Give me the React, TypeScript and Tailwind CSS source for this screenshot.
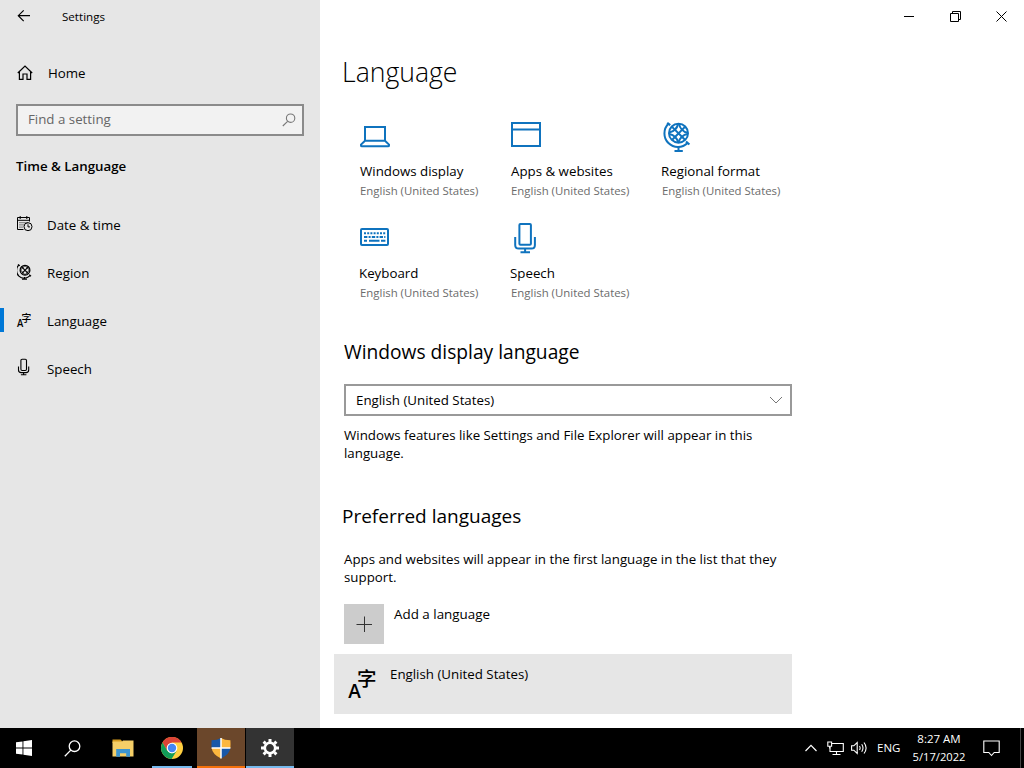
import type { ReactNode } from 'react';

const GlobeIcon = () => (
  <svg width="32" height="32" viewBox="0 0 32 32" fill="none" stroke="currentColor" strokeWidth="2">
    <circle cx="17.5" cy="12.2" r="9.5" />
    <path d="M6.2 1.8 L9.2 4.2 M25 20.5 L28.4 23.5" strokeWidth="2.2" />
    <path d="M7.4 2.8 A13.4 13.4 0 0 0 26.6 22" />
    <path d="M10.8 5.6 L24.2 19 M11 19 L24.2 5.6" />
    <path d="M8.2 11.6 C12.7 10.6 16.2 7 17.2 2.8 M26.6 13 C22.2 13.5 18.2 17.5 17.5 21.5" />
    <path d="M8.4 13 C12.7 14 16.2 17.5 17.2 21.5 M18 2.8 C18.7 7 22.2 11 26.6 11.8" />
    <path d="M17.5 26 V30 M13.5 30 H21.8" />
  </svg>
);

const SmallGlobeIcon = () => (
  <svg width="16" height="18" viewBox="0 0 16 18" fill="none" stroke="currentColor" strokeWidth="1.2">
    <circle cx="8" cy="7.2" r="4.9" />
    <path d="M1 1.4 L2.8 2.8 M12.3 11.6 L14 13.2 M1.7 2.2 A7.2 7.2 0 0 0 12.8 12.9" />
    <path d="M4.7 3.9 L11.3 10.6 M4.7 10.6 L11.3 3.9" />
    <path d="M3.5 7 L8 2.6 L12.5 7 L8 11.8 Z" strokeWidth="0.9" />
    <path d="M7.5 14 V16 M5 16.2 H10" />
  </svg>
);

const LanguageGlyph = ({ size }: { size: number }) => (
  <svg className="overflow-visible" width={size} height={size} viewBox="0 0 28 28" fill="currentColor">
    <text x="0.2" y="28.6" fontSize="20.5" fontWeight="600" fontFamily="Open Sans, sans-serif" textLength="12.6" lengthAdjust="spacingAndGlyphs">A</text>
    <text x="9" y="17.2" fontSize="19.5" fontWeight="500" fontFamily="Noto Sans CJK SC, sans-serif">字</text>
  </svg>
);

const CalendarIcon = () => (
  <svg width="16" height="18" viewBox="0 0 16 18" fill="none" stroke="currentColor">
    <path d="M6.5 14.5 H0.5 V2.5 H12.5 V6.5 M0.5 5.3 H12.5 M3.2 1 V4 M9.8 1 V4" />
    <path d="M2.5 7.7 H11 M2.5 9.9 H7 M2.5 12.1 H6" strokeDasharray="1 1" />
    <circle cx="11" cy="11.7" r="4" />
    <path d="M11 9.3 V11.9 H13" />
  </svg>
);

const MicIcon = () => (
  <svg width="16" height="20" viewBox="0 0 16 20" fill="none" stroke="currentColor" strokeWidth="1.1">
    <rect x="3.9" y="1.2" width="5.6" height="11.3" rx="1.2" />
    <path d="M1.5 8.5 V12 Q1.5 14.6 4.1 14.6 H9.1 Q11.7 14.6 11.7 12 V8.5 M6.6 14.6 V16.8 M3.9 16.8 H9.4" />
  </svg>
);

const navItems = [
  { text: 'Date & time', icon: <CalendarIcon /> },
  { text: 'Region', icon: <SmallGlobeIcon /> },
  { text: 'Language', icon: <LanguageGlyph size={14} />, active: true },
  { text: 'Speech', icon: <MicIcon /> },
];

const TileIcon = ({ children }: { children: ReactNode }) => (
  <svg width="40" height="40" viewBox="0 0 40 40" fill="none" stroke="#0f73be" strokeWidth="2">
    {children}
  </svg>
);

const tiles = [
  {
    text: 'Windows display',
    labelClass: '',
    icon: (
      <TileIcon>
        <path d="M5 23.7 V10 H25 V23.7 Z M5 23.7 L1 27.6 V28.4 Q1 29.3 2 29.3 H28 Q29 29.3 29 28.4 V27.6 L25 23.7" />
      </TileIcon>
    ),
  },
  {
    text: 'Apps & websites',
    labelClass: '',
    icon: (
      <TileIcon>
        <path d="M1 6 H29 V29 H1 Z M1 12.6 H29" />
      </TileIcon>
    ),
  },
  {
    text: 'Regional format',
    labelClass: '-ml-px',
    icon: (
      <div className="-ml-px pt-1 text-[#0f73be]">
        <GlobeIcon />
      </div>
    ),
  },
  {
    text: 'Keyboard',
    labelClass: '-ml-px',
    icon: (
      <TileIcon>
        <rect x="1" y="10" width="27" height="16" rx="1" />
        <path d="M4 14.2 H25.4" strokeDasharray="2 1.2" />
        <path d="M4 18 H25.4" strokeDasharray="3.4 1.2 2 1.2" />
        <path d="M4 21.8 H7 M9 21.8 H19.5 M21 21.8 H25.4" />
      </TileIcon>
    ),
  },
  {
    text: 'Speech',
    labelClass: '-ml-px',
    icon: (
      <TileIcon>
        <rect x="8.4" y="5" width="11.5" height="20.7" rx="1" />
        <path d="M4.2 18 V26 Q4.2 29.6 7.8 29.6 H20.5 Q23.9 29.6 23.9 26 V18 M14.1 29.6 V33 M9.5 33.2 H19" />
      </TileIcon>
    ),
  },
];

const Sidebar = () => (
  <aside className="flex w-80 shrink-0 flex-col bg-[#e6e6e6]">
    <div className="flex h-8 items-center pl-[17px]">
      <svg width="14" height="14" viewBox="0 0 14 14" fill="none" stroke="currentColor" strokeWidth="1.2">
        <path d="M13 6.7 H1.5 M6.7 1.3 L1.3 6.7 L6.7 12.1" />
      </svg>
      <span className="ml-[31px] pt-px text-[11.6px]">Settings</span>
    </div>
    <div className="mt-[17px] flex h-12 items-center pl-[17px]">
      <svg width="16" height="16" viewBox="0 0 16 16" fill="none" stroke="currentColor" strokeWidth="1.2">
        <path d="M0.8 8 L8 1 L15.2 8 M2.4 6.8 V14.4 H6 V9 H10 V14.4 H13.6 V6.8" />
      </svg>
      <span className="ml-[15px] leading-5">Home</span>
    </div>
    <div className="mx-4 mt-[7px] flex h-8 items-center justify-between border-2 border-[#8b8b8b] bg-[#f2f2f2] pr-[6px] pl-[10px] text-[#666]">
      <span className="-mt-px">Find a setting</span>
      <svg width="14" height="14" viewBox="0 0 14 14" fill="none" stroke="#777" strokeWidth="1.1">
        <circle cx="8.6" cy="5.2" r="4.2" />
        <path d="M5.6 8.3 L0.8 13" />
      </svg>
    </div>
    <h2 className="mt-5 ml-4 h-5 leading-5 font-semibold">Time &amp; Language</h2>
    <nav className="mt-6">
      {navItems.map((item) => (
        <div key={item.text} className="flex h-12 items-center">
          <span className={item.active ? 'h-6 w-1 bg-[#0078d7]' : 'h-6 w-1'} />
          <span className="ml-[13px] flex w-[30px] items-center">{item.icon}</span>
          <span className="pt-0.5 leading-5">{item.text}</span>
        </div>
      ))}
    </nav>
  </aside>
);

const WindowControls = () => (
  <div className="flex h-8 justify-end">
    <div className="flex w-[46px] items-center pl-[18px]">
      <span className="h-px w-[10px] bg-black" />
    </div>
    <div className="flex w-[46px] items-center pl-[18px]">
      <svg width="11" height="11" viewBox="0 0 11 11" fill="none" stroke="black">
        <path d="M0.5 2.5 H8.5 V10.5 H0.5 Z M2.5 2.5 V0.5 H10.5 V8.5 H8.5" />
      </svg>
    </div>
    <div className="flex w-[46px] items-center pl-[18px]">
      <svg width="11" height="11" viewBox="0 0 11 11" stroke="black">
        <path d="M0.5 0.5 L10.5 10.5 M10.5 0.5 L0.5 10.5" />
      </svg>
    </div>
  </div>
);

const LanguagePage = () => (
  <main className="flex flex-1 flex-col bg-white">
    <WindowControls />
    <h1 className="mt-[22px] ml-[22px] h-9 text-[26.6px] leading-9 font-[360]">Language</h1>
    <div className="mt-[27px] ml-10 grid grid-cols-[151px_151px_150px]">
      {tiles.map((tile) => (
        <div key={tile.text} className="h-[102px] whitespace-nowrap">
          <div className="h-11">{tile.icon}</div>
          <div className={tile.labelClass}>
            <div className="h-5 leading-5">{tile.text}</div>
          </div>
          <div className="text-[11.4px] leading-[19px] text-[#6b6b6b]">English (United States)</div>
        </div>
      ))}
    </div>

    <div className="ml-6 w-[448px]">
      <h2 className="mt-[17px] h-7 text-[19.2px] leading-7">Windows display language</h2>
      <div className="mt-[18px] flex h-8 items-center justify-between border-2 border-[#999] pr-[7px] pl-[10px]">
        <span className="leading-5">English (United States)</span>
        <svg width="14" height="8" viewBox="0 0 14 8" fill="none" stroke="#777">
          <path d="M1 1 L7 7 L13 1" />
        </svg>
      </div>
      <p className="mt-[10px] leading-[18px]">
        Windows features like Settings and File Explorer will appear in this
        <br />
        language.
      </p>

      <h2 className="mt-10 -ml-0.5 h-7 text-[19px] leading-7">Preferred languages</h2>
      <p className="mt-5 leading-[18px] whitespace-nowrap">
        Apps and websites will appear in the first language in the list that they
        <br />
        support.
      </p>
      <div className="mt-[18px] flex h-10">
        <div className="flex w-10 items-center justify-center bg-[#ccc]">
          <svg width="16" height="16" viewBox="0 0 16 16" stroke="#333">
            <path d="M8.5 0.5 V16 M0.5 8.5 H16" />
          </svg>
        </div>
        <span className="ml-[10px] text-[13.4px] leading-5">Add a language</span>
      </div>
      <div className="mt-[10px] -ml-[10px] flex h-[60px] bg-[#e6e6e6] pt-[15px] pl-[14px]">
        <LanguageGlyph size={28} />
        <span className="-mt-[5px] ml-[14px] leading-5">English (United States)</span>
      </div>
    </div>
  </main>
);

const Taskbar = () => (
  <footer className="flex h-10 bg-black text-[11.5px] text-white">
    <div className="flex w-12 items-center justify-center">
      <svg width="16" height="16" viewBox="0 0 16 16" fill="white">
        <path d="M0 2.3 L6.5 1.4 V7.5 H0 Z M7.4 1.2 L16 0 V7.5 H7.4 Z M0 8.4 H6.5 V14.6 L0 13.7 Z M7.4 8.4 H16 V16 L7.4 14.8 Z" />
      </svg>
    </div>
    <div className="flex w-12 items-center justify-center">
      <svg width="17" height="17" viewBox="0 0 17 17" fill="none" stroke="white" strokeWidth="1.3">
        <circle cx="10.5" cy="6.2" r="5.3" />
        <path d="M6.8 10.1 L0.8 16.2" />
      </svg>
    </div>
    <div className="ml-[3px] flex w-12 items-center justify-center">
      <svg width="22" height="18" viewBox="0 0 22 18">
        <path d="M0.5 0.5 H8.5 L10 2 V4 H0.5 Z" fill="#d59b1f" />
        <path d="M0.5 2.5 H10 L11 1.5 H21.5 V17.5 H0.5 Z" fill="#f5cf68" />
        <path d="M4.2 10 H18 V17.8 H14.2 V14.2 H8 V17.8 H4.2 Z" fill="#3d95cf" />
      </svg>
    </div>
    <div className="ml-[5px] flex w-10 flex-col items-center">
      <div className="flex flex-1 items-center">
        <svg className="mt-[2px]" width="22" height="22" viewBox="0 0 22 22">
          <circle cx="11" cy="11" r="11" fill="#ffcf40" />
          <path d="M1.5 5.5 A11 11 0 0 1 20.6 5.5 H11 L6.2 13.8 Z" fill="#dc4437" />
          <path d="M1.5 5.5 L6.3 13.8 L11 16.5 L15.7 13.8 L10.6 22 A11 11 0 0 1 1.5 5.5 Z" fill="#119d58" />
          <circle cx="11" cy="11" r="5.3" fill="white" />
          <circle cx="11" cy="11" r="4.2" fill="#4486f4" />
        </svg>
      </div>
      <span className="h-[2px] w-10 bg-[#76b9ed]" />
    </div>
    <div className="ml-[5px] flex w-12 flex-col items-center bg-[#6b472b]">
      <div className="flex flex-1 items-center">
        <svg className="mt-px" width="20" height="22" viewBox="0 0 20 22">
          <path d="M10 1 V11 H0.6 Q0.3 7 0.6 3.3 Q6.5 3.3 10 1 Z M10 11 H19.4 Q18.5 17.5 10 21.5 Z" fill="#1958a8" />
          <path d="M10 1 Q13.5 3.3 19.4 3.3 Q19.7 7 19.4 11 H10 Z M0.6 11 H10 V21.5 Q1.5 17.5 0.6 11 Z" fill="#fdb73e" />
          <path d="M10 1 V21.5 M0.6 11 H19.4" stroke="white" strokeWidth="1.5" />
        </svg>
      </div>
      <span className="h-[2px] w-full bg-[#f5700a]" />
    </div>
    <div className="ml-px flex w-12 flex-col items-center bg-[#333]">
      <div className="flex flex-1 items-center">
        <svg className="mt-px" width="20" height="20" viewBox="-10 -10 20 20" stroke="white" fill="none">
          <circle r="5.2" strokeWidth="2.6" />
          <path d="M0 -9 V-6 M0 6 V9 M-9 0 H-6 M6 0 H9 M-6.4 -6.4 L-4.3 -4.3 M6.4 -6.4 L4.3 -4.3 M-6.4 6.4 L-4.3 4.3 M6.4 6.4 L4.3 4.3" strokeWidth="3" />
        </svg>
      </div>
      <span className="h-[2px] w-full bg-[#76b9ed]" />
    </div>

    <div className="ml-auto flex items-center">
      <svg width="12" height="8" viewBox="0 0 12 8" fill="none" stroke="white" strokeWidth="1.2">
        <path d="M0.5 7 L6 1.4 L11.5 7" />
      </svg>
      <svg className="ml-[10px]" width="17" height="15" viewBox="0 0 17 15" fill="none" stroke="white" strokeWidth="1.1">
        <path d="M5 2.5 H16.3 V10.5 H3 V6 M9.5 10.5 V13.5 M5.5 13.5 H13.5" />
        <path d="M0.8 1 H4.6 V5.2 H0.8 Z M2.7 5 V7.5" />
      </svg>
      <svg className="ml-[7px]" width="17" height="14" viewBox="0 0 17 14" fill="none" stroke="white" strokeWidth="1.1">
        <path d="M0.6 4.8 H2.8 L6.2 1.5 V12.5 L2.8 9.2 H0.6 Z M8.5 5 Q9.8 7 8.5 9 M10.7 3.3 Q13.3 7 10.7 10.7 M13 1.5 Q17.2 7 13 12.5" />
      </svg>
      <span className="ml-[9px] w-[24px]">ENG</span>
      <div className="ml-[11px] flex w-[54px] flex-col items-center leading-[18px] whitespace-nowrap">
        <span>8:27 AM</span>
        <span className="text-[11.2px]">5/17/2022</span>
      </div>
      <svg className="mt-px ml-[17px]" width="17" height="17" viewBox="0 0 17 17" fill="none" stroke="white" strokeWidth="1.1">
        <path d="M0.8 1 H16.2 V12.5 H11.2 L8.5 15.5 L5.8 12.5 H0.8 Z" />
      </svg>
      <span className="mr-[3px] ml-[20px] h-10 w-px bg-[#444]" />
    </div>
  </footer>
);

const App = () => (
  <div className="flex h-screen w-screen flex-col overflow-hidden font-['Open_Sans','Noto_Sans',sans-serif] text-[13.3px] text-black">
    <div className="flex h-[728px]">
      <Sidebar />
      <LanguagePage />
    </div>
    <Taskbar />
  </div>
);

export default App;
